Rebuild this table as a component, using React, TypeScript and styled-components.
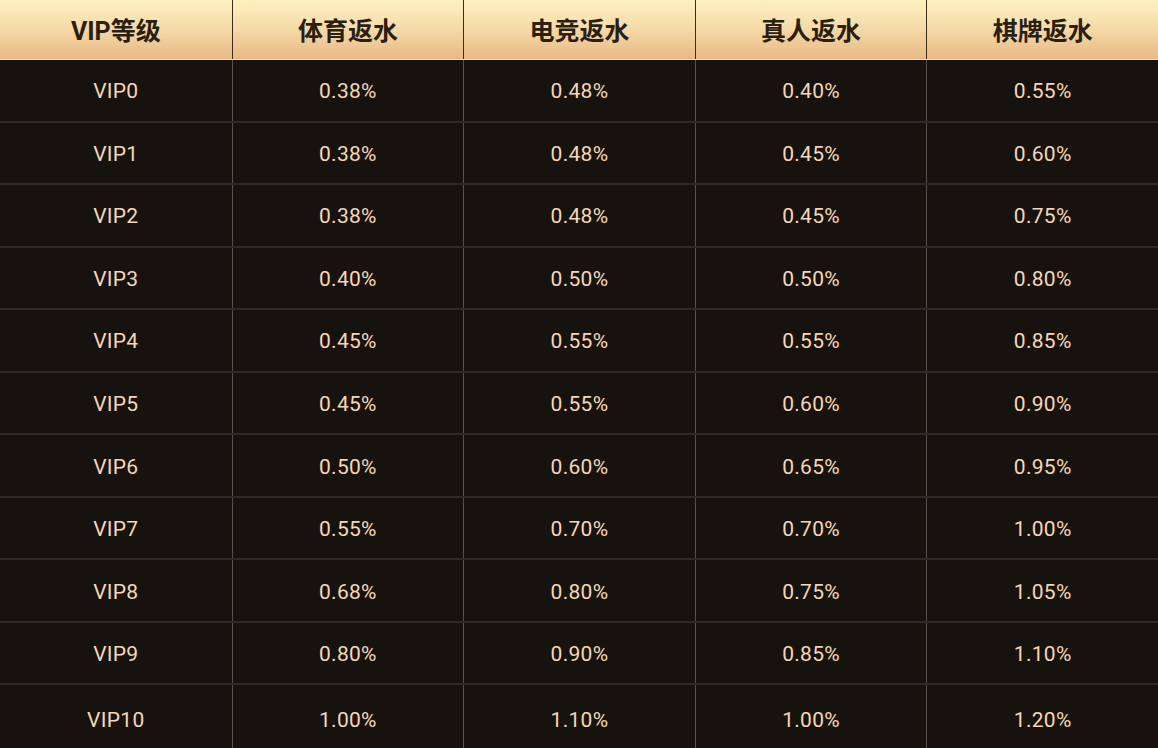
import styled, { createGlobalStyle } from "styled-components";

const GlobalStyle = createGlobalStyle`
  html, body {
    margin: 0;
    padding: 0;
    background: #16130f;
  }
  * {
    box-sizing: border-box;
  }
`;

const columns = ["VIP等级", "体育返水", "电竞返水", "真人返水", "棋牌返水"];

const rows: string[][] = [
  ["VIP0", "0.38%", "0.48%", "0.40%", "0.55%"],
  ["VIP1", "0.38%", "0.48%", "0.45%", "0.60%"],
  ["VIP2", "0.38%", "0.48%", "0.45%", "0.75%"],
  ["VIP3", "0.40%", "0.50%", "0.50%", "0.80%"],
  ["VIP4", "0.45%", "0.55%", "0.55%", "0.85%"],
  ["VIP5", "0.45%", "0.55%", "0.60%", "0.90%"],
  ["VIP6", "0.50%", "0.60%", "0.65%", "0.95%"],
  ["VIP7", "0.55%", "0.70%", "0.70%", "1.00%"],
  ["VIP8", "0.68%", "0.80%", "0.75%", "1.05%"],
  ["VIP9", "0.80%", "0.90%", "0.85%", "1.10%"],
  ["VIP10", "1.00%", "1.10%", "1.00%", "1.20%"],
];

const Table = styled.div`
  width: 1158px;
  height: 748px;
  display: flex;
  flex-direction: column;
  background: #16130f;
  font-family: Roboto, "Noto Sans CJK SC", sans-serif;
  overflow: hidden;
`;

const HeaderRow = styled.div`
  height: 60px;
  flex: none;
  display: grid;
  grid-template-columns: repeat(5, 1fr);
  background: linear-gradient(180deg, #fcf2c0 0%, #f6dcaa 45%, #e7b984 100%);
  border-bottom: 1px solid #f3d9b4;
`;

const HeaderCell = styled.div<{ $first?: boolean }>`
  display: flex;
  align-items: center;
  justify-content: center;
  padding-bottom: 1px;
  font-size: 25px;
  font-weight: 700;
  color: #2b1e12;
  border-left: ${({ $first }) => ($first ? "none" : "1px solid #3b2c1d")};
`;

const Body = styled.div`
  flex: 1;
  display: grid;
  grid-template-rows: repeat(11, 1fr);
`;

const Row = styled.div<{ $last?: boolean }>`
  display: grid;
  grid-template-columns: repeat(5, 1fr);
  border-bottom: ${({ $last }) => ($last ? "none" : "2px solid #2d2a27")};
`;

const Cell = styled.div<{ $first?: boolean; $last?: boolean }>`
  display: flex;
  align-items: center;
  justify-content: center;
  padding-top: ${({ $last }) => ($last ? "6px" : "2px")};
  font-size: 21px;
  letter-spacing: 0.3px;
  color: #f8d6b4;
  border-left: ${({ $first }) => ($first ? "none" : "1px solid #57514b")};
`;

export default function App() {
  return (
    <>
      <GlobalStyle />
      <Table>
        <HeaderRow>
          {columns.map((c, i) => (
            <HeaderCell key={c} $first={i === 0}>
              {c}
            </HeaderCell>
          ))}
        </HeaderRow>
        <Body>
          {rows.map((r, ri) => (
            <Row key={r[0]} $last={ri === rows.length - 1}>
              {r.map((v, ci) => (
                <Cell key={ci} $first={ci === 0} $last={ri === rows.length - 1}>
                  {v}
                </Cell>
              ))}
            </Row>
          ))}
        </Body>
      </Table>
    </>
  );
}
